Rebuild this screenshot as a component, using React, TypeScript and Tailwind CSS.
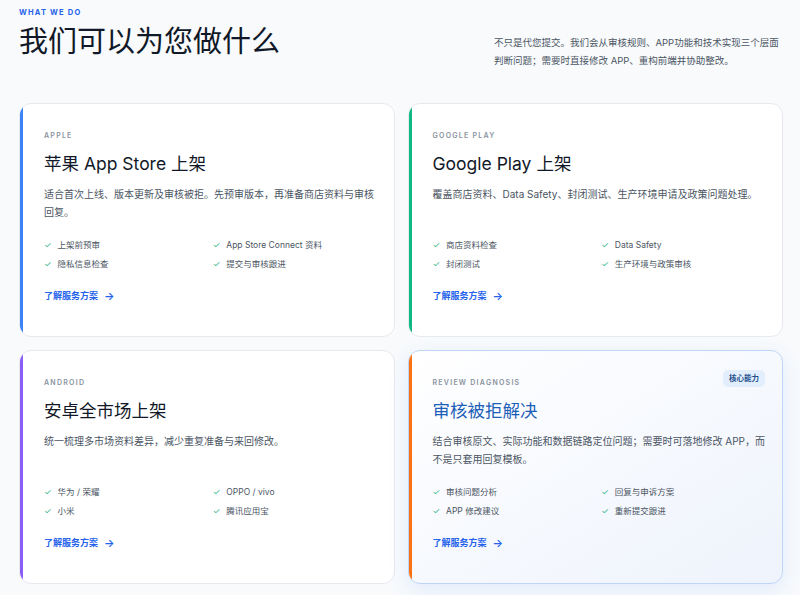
const font = { fontFamily: 'Inter, "Noto Sans CJK SC", sans-serif' };

interface Service {
  label: string;
  title: string;
  desc: string;
  items: string[];
  bar: string;
  featured?: boolean;
}

const services: Service[] = [
  {
    label: 'APPLE',
    title: '苹果 App Store 上架',
    desc: '适合首次上线、版本更新及审核被拒。先预审版本，再准备商店资料与审核回复。',
    items: ['上架前预审', 'App Store Connect 资料', '隐私信息检查', '提交与审核跟进'],
    bar: 'bg-[#3b82f6]',
  },
  {
    label: 'GOOGLE PLAY',
    title: 'Google Play 上架',
    desc: '覆盖商店资料、Data Safety、封闭测试、生产环境申请及政策问题处理。',
    items: ['商店资料检查', 'Data Safety', '封闭测试', '生产环境与政策审核'],
    bar: 'bg-[#10b981]',
  },
  {
    label: 'ANDROID',
    title: '安卓全市场上架',
    desc: '统一梳理多市场资料差异，减少重复准备与来回修改。',
    items: ['华为 / 荣耀', 'OPPO / vivo', '小米', '腾讯应用宝'],
    bar: 'bg-[#8b5cf6]',
  },
  {
    label: 'REVIEW DIAGNOSIS',
    title: '审核被拒解决',
    desc: '结合审核原文、实际功能和数据链路定位问题；需要时可落地修改 APP，而不是只套用回复模板。',
    items: ['审核问题分析', '回复与申诉方案', 'APP 修改建议', '重新提交跟进'],
    bar: 'bg-[#f97316]',
    featured: true,
  },
];

function ServiceCard({ s }: { s: Service }) {
  return (
    <div
      className={`relative flex overflow-hidden rounded-[12px] border ${
        s.featured
          ? 'border-[#bfd5f7] bg-gradient-to-br from-white to-[#eef3fc] shadow-[0_6px_20px_rgba(59,130,246,0.12)]'
          : 'border-[#e6e9ee] bg-white'
      }`}
    >
      <div className={`w-[3px] shrink-0 ${s.bar}`} />
      <div className="flex-1 pl-[21px] pr-3 pt-[27px] pb-[32px]">
        {s.featured && (
          <span className="absolute right-[17px] top-[19px] rounded-[5px] bg-[#e3eefc] px-[6px] py-[3px] text-[7.5px] font-semibold text-[#1e4e8c]">
            核心能力
          </span>
        )}
        <div className="text-[7px] font-semibold tracking-[0.18em] text-[#8a93a0]">{s.label}</div>
        <h3 className={`mt-[9px] text-[17.5px] leading-[26px] ${s.featured ? 'text-[#1d5fb8]' : 'text-[#111827]'}`}>
          {s.title}
        </h3>
        <p className="mt-[8px] min-h-[36px] text-[10px] leading-[18px] text-[#4b5563]">{s.desc}</p>
        <div className="mt-[15px] grid grid-cols-2 gap-y-[1px] text-[8.5px] leading-[18px] text-[#4b5563]">
          {s.items.map((it) => (
            <div key={it} className="flex items-center gap-[6px]">
              <span className="text-[#34b58a]">✓</span>
              {it}
            </div>
          ))}
        </div>
        <div className="mt-[15px] flex items-center gap-[6px] text-[9px] font-semibold text-[#2563eb]">
          了解服务方案 <span className="text-[11px]">→</span>
        </div>
      </div>
    </div>
  );
}

export default function App() {
  return (
    <div style={font} className="h-[595px] overflow-hidden bg-[#f8fafc] px-[19px] pt-[7px]">
      <div className="flex items-start justify-between">
        <div>
          <div className="text-[7.5px] font-bold tracking-[0.16em] text-[#2563eb]">WHAT WE DO</div>
          <h1 className="mt-[4px] text-[29px] leading-[40px] text-[#111827]">我们可以为您做什么</h1>
        </div>
        <p className="mt-[27px] w-[287px] text-[9.5px] leading-[18px] text-[#4b5563]">
          不只是代您提交。我们会从审核规则、APP功能和技术实现三个层面判断问题；需要时直接修改 APP、重构前端并协助整改。
        </p>
      </div>
      <div className="mt-[33px] mr-[-2px] grid grid-cols-2 gap-[13px]">
        {services.map((s) => (
          <ServiceCard key={s.label} s={s} />
        ))}
      </div>
    </div>
  );
}
